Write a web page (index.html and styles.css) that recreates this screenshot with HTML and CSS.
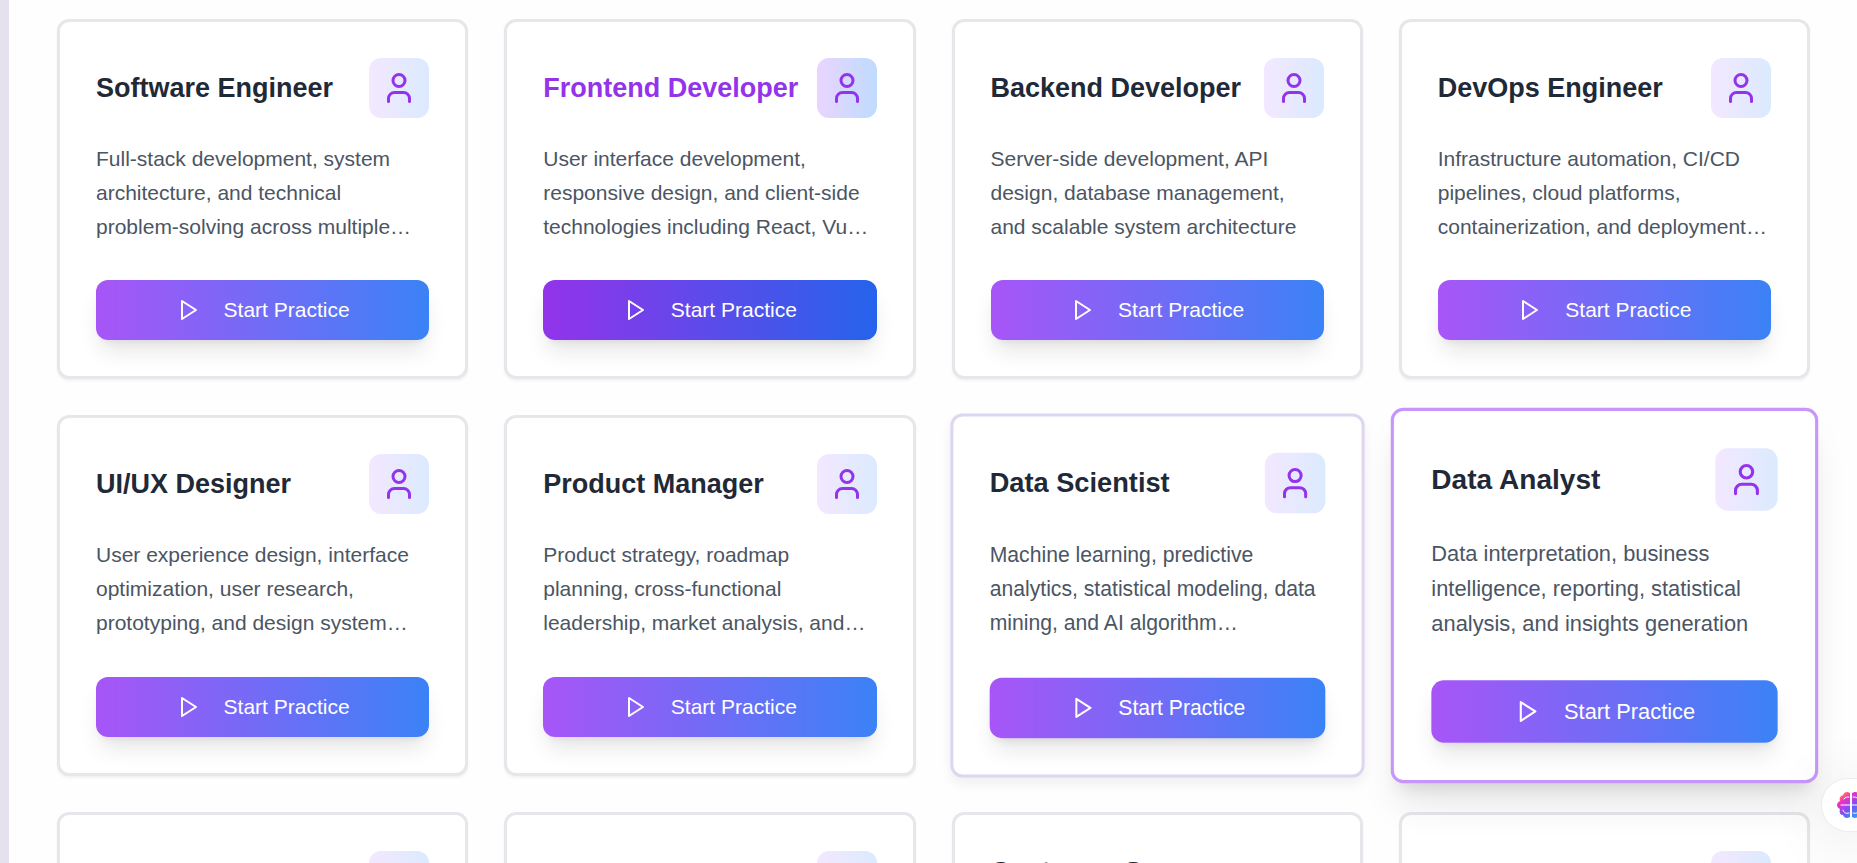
FILE: index.html
```html
<!DOCTYPE html>
<html lang="en">
<head>
<meta charset="utf-8">
<title>Practice roles</title>
<link rel="stylesheet" href="styles.css">
</head>
<body>
<svg class="sprite" aria-hidden="true">
  <symbol id="user" viewBox="0 0 24 24"><path d="M19 21v-2a4 4 0 0 0-4-4H9a4 4 0 0 0-4 4v2"/><circle cx="12" cy="7" r="4"/></symbol>
  <symbol id="play" viewBox="0 0 24 24"><path d="M6 3l14 9-14 9z"/></symbol>
</svg>
<main class="panel">
  <div class="grid">
    <article class="card">
      <header class="head"><h3 class="title">Software Engineer</h3><span class="badge"><svg class="user"><use href="#user"/></svg></span></header>
      <p class="desc">Full-stack development, system architecture, and technical problem-solving across multiple…</p>
      <button class="start" type="button"><svg class="play"><use href="#play"/></svg>Start Practice</button>
    </article>
    <article class="card card-active">
      <header class="head"><h3 class="title">Frontend Developer</h3><span class="badge"><svg class="user"><use href="#user"/></svg></span></header>
      <p class="desc">User interface development, responsive design, and client-side technologies including React, Vu…</p>
      <button class="start" type="button"><svg class="play"><use href="#play"/></svg>Start Practice</button>
    </article>
    <article class="card">
      <header class="head"><h3 class="title">Backend Developer</h3><span class="badge"><svg class="user"><use href="#user"/></svg></span></header>
      <p class="desc">Server-side development, API design, database management, and scalable system architecture</p>
      <button class="start" type="button"><svg class="play"><use href="#play"/></svg>Start Practice</button>
    </article>
    <article class="card">
      <header class="head"><h3 class="title">DevOps Engineer</h3><span class="badge"><svg class="user"><use href="#user"/></svg></span></header>
      <p class="desc">Infrastructure automation, CI/CD pipelines, cloud platforms, containerization, and deployment…</p>
      <button class="start" type="button"><svg class="play"><use href="#play"/></svg>Start Practice</button>
    </article>
    <article class="card">
      <header class="head"><h3 class="title">UI/UX Designer</h3><span class="badge"><svg class="user"><use href="#user"/></svg></span></header>
      <p class="desc">User experience design, interface optimization, user research, prototyping, and design system…</p>
      <button class="start" type="button"><svg class="play"><use href="#play"/></svg>Start Practice</button>
    </article>
    <article class="card">
      <header class="head"><h3 class="title">Product Manager</h3><span class="badge"><svg class="user"><use href="#user"/></svg></span></header>
      <p class="desc">Product strategy, roadmap planning, cross-functional leadership, market analysis, and…</p>
      <button class="start" type="button"><svg class="play"><use href="#play"/></svg>Start Practice</button>
    </article>
    <article class="card card-settling">
      <header class="head"><h3 class="title">Data Scientist</h3><span class="badge"><svg class="user"><use href="#user"/></svg></span></header>
      <p class="desc">Machine learning, predictive analytics, statistical modeling, data mining, and AI algorithm…</p>
      <button class="start" type="button"><svg class="play"><use href="#play"/></svg>Start Practice</button>
    </article>
    <article class="card card-raised">
      <header class="head"><h3 class="title">Data Analyst</h3><span class="badge"><svg class="user"><use href="#user"/></svg></span></header>
      <p class="desc">Data interpretation, business intelligence, reporting, statistical analysis, and insights generation</p>
      <button class="start" type="button"><svg class="play"><use href="#play"/></svg>Start Practice</button>
    </article>
    <article class="card"><header class="head"><span class="badge"><svg class="user"><use href="#user"/></svg></span></header></article>
    <article class="card"><header class="head"><span class="badge"><svg class="user"><use href="#user"/></svg></span></header></article>
    <article class="card"><header class="head"><h3 class="title">Customer Success Manager</h3><span class="badge"><svg class="user"><use href="#user"/></svg></span></header></article>
    <article class="card"><header class="head"><span class="badge"><svg class="user"><use href="#user"/></svg></span></header></article>
  </div>
  <button class="assistant" type="button" aria-label="Assistant">
    <svg class="brain" viewBox="0 0 28 28">
      <defs><linearGradient id="brain-fill" gradientUnits="userSpaceOnUse" x1="4" y1="1" x2="24" y2="27"><stop offset="0" stop-color="#ffa028"/><stop offset=".25" stop-color="#ee30c4"/><stop offset=".55" stop-color="#7a50f5"/><stop offset="1" stop-color="#16b8f5"/></linearGradient></defs>
      <path fill="url(#brain-fill)" d="M13 2v24c-3 2-6 1-7-2-3 0-4-3-3-6-4-2-4-6 0-8-1-3 0-5 3-6 1-3 4-4 7-2zM15 2v24c3 2 6 1 7-2 3 0 4-3 3-6 4-2 4-6 0-8 1-3 0-5-3-6-1-3-4-4-7-2z"/>
      <path class="folds" d="M4 14h9M7 8c1-2 3-2 5-2M6 19c1 3 3 4 6 3M15 14h9M21 8c-1-2-3-2-5-2M22 19c-1 3-3 4-6 3"/>
    </svg>
  </button>
</main>
</body>
</html>
```
FILE: styles.css
```css
* { box-sizing: border-box; margin: 0; }
body {
  height: 100vh;
  padding-left: 9px;
  overflow: hidden;
  background: #e5e2ee;
  font-family: "Liberation Sans", Arial, sans-serif;
}
.sprite { position: absolute; width: 0; height: 0; }
.panel {
  position: relative;
  height: 100%;
  padding: 19px 47px 0 48px;
  overflow: hidden;
  background: #fefefe;
}
.grid {
  display: grid;
  grid-template-columns: repeat(4, minmax(0, 1fr));
  gap: 36px;
}
.card {
  display: flex;
  flex-direction: column;
  min-height: 360px;
  padding: 36px;
  border: 3px solid #e5e7eb;
  border-radius: 12px;
  background: #fff;
  box-shadow: 0 2px 3px rgba(0, 0, 0, 0.05);
}
.card:nth-child(n + 5) { min-height: 361px; }
.head {
  display: flex;
  align-items: center;
  justify-content: space-between;
  margin-bottom: 24px;
}
.title {
  color: #1f2937;
  font-size: 27px;
  font-weight: 700;
  line-height: 42px;
}
.badge {
  display: flex;
  flex-shrink: 0;
  align-items: center;
  justify-content: center;
  width: 60px;
  height: 60px;
  margin-left: auto;
  border-radius: 12px;
  background: linear-gradient(to right, #f3e8ff, #dbeafe);
}
.user, .play {
  fill: none;
  stroke: currentColor;
  stroke-width: 2;
  stroke-linecap: round;
  stroke-linejoin: round;
}
.user { width: 36px; height: 36px; color: #9333ea; }
.play { width: 24px; height: 24px; }
.desc {
  margin-bottom: 36px;
  color: #4b5563;
  font-size: 21px;
  line-height: 34px;
}
.start {
  display: flex;
  align-items: center;
  justify-content: center;
  gap: 24px;
  height: 60px;
  margin-top: auto;
  border: 0;
  border-radius: 12px;
  background: linear-gradient(to right, #a855f7, #3b82f6);
  box-shadow: 0 15px 22px -4px rgba(0, 0, 0, 0.1), 0 6px 9px -6px rgba(0, 0, 0, 0.1);
  color: #fff;
  font: 500 21px/30px "Liberation Sans", Arial, sans-serif;
}
.card-active .title { color: #9333ea; }
.card-active .badge { background: linear-gradient(to right, #e9d5ff, #bfdbfe); }
.card-active .start { background: linear-gradient(to right, #9333ea, #2563eb); }
.card-settling {
  border-color: #ded6f0;
  box-shadow: 0 6px 12px rgba(0, 0, 0, 0.06);
  transform: scale(1.008);
}
.card-raised {
  z-index: 1;
  border-color: #c896fa;
  box-shadow: 0 26px 36px -7px rgba(0, 0, 0, 0.1), 0 12px 15px -9px rgba(0, 0, 0, 0.1);
  transform: scale(1.04);
}
.assistant {
  position: absolute;
  right: -24px;
  bottom: 31px;
  z-index: 2;
  display: flex;
  align-items: center;
  height: 54px;
  padding: 0 15px;
  border: 1px solid #ececec;
  border-radius: 27px;
  background: #fff;
  box-shadow: 0 6px 60px rgba(0, 0, 0, 0.1);
}
.brain { width: 28px; height: 28px; }
.folds { fill: none; stroke: #fff; stroke-width: 1; stroke-linecap: round; }
```
